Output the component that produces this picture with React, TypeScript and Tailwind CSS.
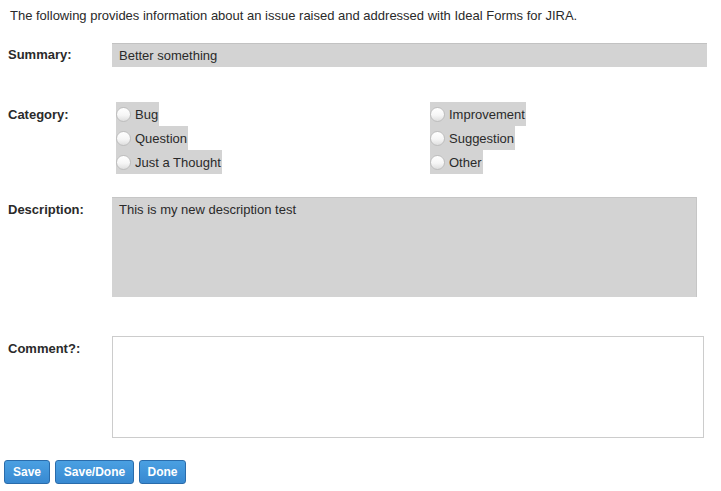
import React from "react";

function Radio({ label }: { label: string }) {
  return (
    <div className="h-[24px]">
      <span className="inline-flex h-[24px] items-center bg-[#d3d3d3] pr-[1px]">
        <span className="mr-[4px] inline-block h-[15px] w-[15px] rounded-full border border-[#bdbdbd] bg-[linear-gradient(180deg,#ffffff_0%,#f6f6f6_55%,#dedede_100%)]" />
        <span className="leading-[15px]">{label}</span>
      </span>
    </div>
  );
}

export default function App() {
  return (
    <div className="h-[491px] w-[721px] bg-white font-['Liberation_Sans',Arial,sans-serif] text-[13px] text-[#2a2a2a]">
      <p className="pl-[10px] pt-[8px] leading-[15px]">
        The following provides information about an issue raised and addressed with Ideal Forms for JIRA.
      </p>

      <div className="mt-[20px] flex">
        <div className="w-[112px] pl-[8px] font-bold leading-[24px]">Summary:</div>
        <div className="h-[24px] w-[595px] border-t border-[#c2c2c2] bg-[#d3d3d3] pl-[7px] leading-[23px]">
          Better something
        </div>
      </div>

      <div className="mt-[35px] flex">
        <div className="w-[112px] pl-[8px] pt-[5px] font-bold leading-[15px]">Category:</div>
        <div className="ml-[4px] flex">
          <div className="w-[314px]">
            <Radio label="Bug" />
            <Radio label="Question" />
            <Radio label="Just a Thought" />
          </div>
          <div>
            <Radio label="Improvement" />
            <Radio label="Suggestion" />
            <Radio label="Other" />
          </div>
        </div>
      </div>

      <div className="mt-[23px] flex">
        <div className="w-[112px] pl-[8px] pt-[5px] font-bold leading-[15px]">Description:</div>
        <div className="h-[100px] w-[585px] border-t border-r border-[#c6c6c6] bg-[#d3d3d3] pl-[7px] pt-[4px] leading-[15px]">
          This is my new description test
        </div>
      </div>

      <div className="mt-[39px] flex">
        <div className="w-[112px] pl-[8px] pt-[5px] font-bold leading-[15px]">Comment?:</div>
        <div className="h-[102px] w-[592px] border border-[#cccccc] bg-white" />
      </div>

      <div className="ml-[4px] mt-[22px] flex gap-[5px]">
        {[
          ["Save", "w-[46px]"],
          ["Save/Done", "w-[79px]"],
          ["Done", "w-[47px]"],
        ].map(([t, w]) => (
          <button
            key={t}
            className={`${w} h-[24px] rounded-[3px] border border-[#2a6cab] bg-[linear-gradient(180deg,#4aa0e2_0%,#3889d1_100%)] text-[12px] font-bold leading-[22px] text-white`}
          >
            {t}
          </button>
        ))}
      </div>
    </div>
  );
}
